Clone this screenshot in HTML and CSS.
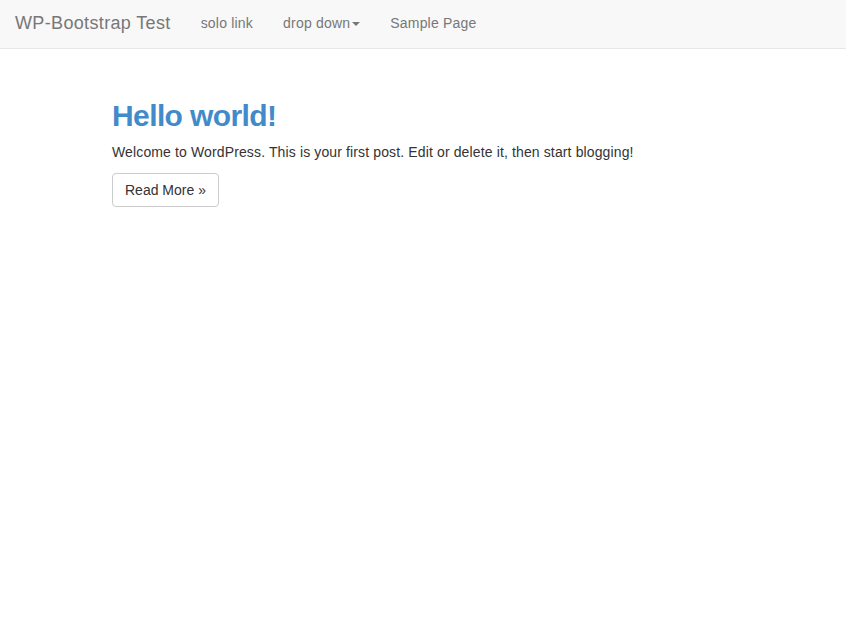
FILE: index.html
```html
<!DOCTYPE html>
<html lang="en">
<head>
<meta charset="utf-8">
<title>WP-Bootstrap Test</title>
<link rel="stylesheet" href="styles.css">
</head>
<body>
<nav class="navbar">
  <a class="brand" href="#">WP-Bootstrap Test</a>
  <ul class="nav">
    <li><a href="#">solo link</a></li>
    <li><a href="#">drop down<span class="caret"></span></a></li>
    <li><a href="#">Sample Page</a></li>
  </ul>
</nav>
<main class="main">
  <article class="post">
    <h2 class="post-title"><a href="#">Hello world!</a></h2>
    <p class="post-text">Welcome to WordPress. This is your first post. Edit or delete it, then start blogging!</p>
    <div class="post-actions"><a class="btn" href="#">Read More &raquo;</a></div>
  </article>
</main>
</body>
</html>
```
FILE: styles.css
```css
* { box-sizing: border-box; }
html, body { margin: 0; padding: 0; }
body {
  font-family: "Liberation Sans", Arial, sans-serif;
  font-size: 14px;
  line-height: 20px;
  color: #333;
  background: #fff;
}
a { text-decoration: none; }
.navbar {
  display: flex;
  align-items: flex-start;
  height: 49px;
  background: #f8f8f8;
  border-bottom: 1px solid #e7e7e7;
}
.brand {
  display: block;
  padding: 13px 15px 0 15px;
  font-size: 18px;
  line-height: 20px;
  letter-spacing: 0.35px;
  color: #777;
}
.nav {
  display: flex;
  list-style: none;
  margin: 0;
  padding: 0;
}
.nav a {
  display: block;
  padding: 13px 15px 0 15px;
  line-height: 20px;
  letter-spacing: 0.2px;
  color: #777;
}
.caret {
  display: inline-block;
  width: 0;
  height: 0;
  margin-left: 2px;
  vertical-align: middle;
  border-top: 4px solid #777;
  border-left: 4px solid transparent;
  border-right: 4px solid transparent;
}
.main {
  padding: 30px 0 0 112px;
}
.post-title {
  margin: 20px 0 10px;
  font-size: 30px;
  line-height: 33px;
  font-weight: bold;
  letter-spacing: -0.6px;
}
.post-title a { color: #428bca; }
.post-text { margin: 0 0 11px; letter-spacing: 0.13px; }
.btn {
  display: inline-block;
  height: 34px;
  padding: 6px 12px;
  font-size: 14px;
  line-height: 20px;
  color: #333;
  background: #fff;
  border: 1px solid #ccc;
  border-radius: 4px;
}
```
